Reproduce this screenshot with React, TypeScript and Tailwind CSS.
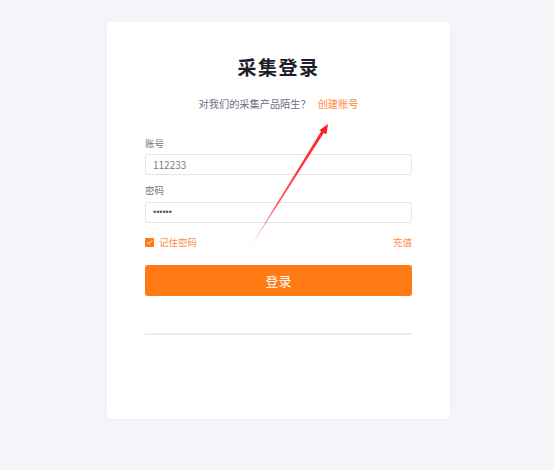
import { Check } from "lucide-react";

const font = { fontFamily: '"Noto Sans CJK SC", "Noto Sans", sans-serif' };

function Arrow() {
  // annotation arrow drawn over the form
  return (
    <svg
      className="pointer-events-none absolute left-0 top-0"
      width="554"
      height="470"
      viewBox="0 0 554 470"
    >
      <defs>
        <linearGradient id="fade" x1="250" y1="247" x2="328" y2="124" gradientUnits="userSpaceOnUse">
          <stop offset="0" stopColor="#ff2a2a" stopOpacity="0" />
          <stop offset="0.35" stopColor="#ff2a2a" stopOpacity="0.8" />
          <stop offset="1" stopColor="#ff1e1e" stopOpacity="1" />
        </linearGradient>
      </defs>
      <polygon points="250,247 250.6,247.4 324.4,131.9 321.8,130.3" fill="url(#fade)" />
      <polygon points="328,124 326.4,134.6 319.4,130.2" fill="#ff1e1e" />
    </svg>
  );
}

export default function App() {
  return (
    <div className="relative min-h-[470px] w-full bg-[#f4f5f9] pt-[22px]" style={font}>
      <div className="ml-[107px] flex h-[397px] w-[343px] flex-col items-center rounded-[4px] bg-white shadow-[0_1px_4px_rgba(0,0,0,0.04)]">
        <h1 className="mt-[32px] text-[19px] font-bold leading-[26px] tracking-[1.5px] text-[#1d1d2b]">
          采集登录
        </h1>
        <p className="mt-[17px] text-[10.2px] leading-[14px] text-[#6b6e84]">
          对我们的采集产品陌生？
          <span className="ml-[7px] text-[#ff8a3d]">创建账号</span>
        </p>

        <div className="mt-[26px] flex w-[267px] flex-col">
          <label className="text-[9.5px] leading-[13px] text-[#6f7183]">账号</label>
          <div className="mt-[4px] flex h-[21px] items-center rounded-[3px] border border-[#e3e5ea] px-[7px] text-[10px] text-[#7a7c86]">
            112233
          </div>
          <label className="mt-[9px] text-[9.5px] leading-[13px] text-[#6f7183]">密码</label>
          <div
            className="mt-[5px] flex h-[21px] items-center rounded-[3px] border border-[#e3e5ea] px-[7px] text-[9px] text-[#555]"
            style={{ fontFamily: '"Liberation Sans", sans-serif' }}
          >
            ••••••
          </div>

          <div className="mt-[13px] flex items-center justify-between text-[9.5px] leading-[13px] text-[#ff8a3d]">
            <div className="flex items-center gap-[5px]">
              <span className="flex h-[9px] w-[9px] items-center justify-center rounded-[1px] bg-[#ff7a15]">
                <Check className="h-[7px] w-[7px] text-white" strokeWidth={3} />
              </span>
              记住密码
            </div>
            <span>充值</span>
          </div>

          <button className="mt-[16px] h-[31px] w-full rounded-[3px] bg-[#ff7a12] text-[13px] text-white">
            登录
          </button>

          <div className="mt-[37px] h-[2px] w-full bg-[#ececf1]" />
        </div>
      </div>
      <Arrow />
    </div>
  );
}
